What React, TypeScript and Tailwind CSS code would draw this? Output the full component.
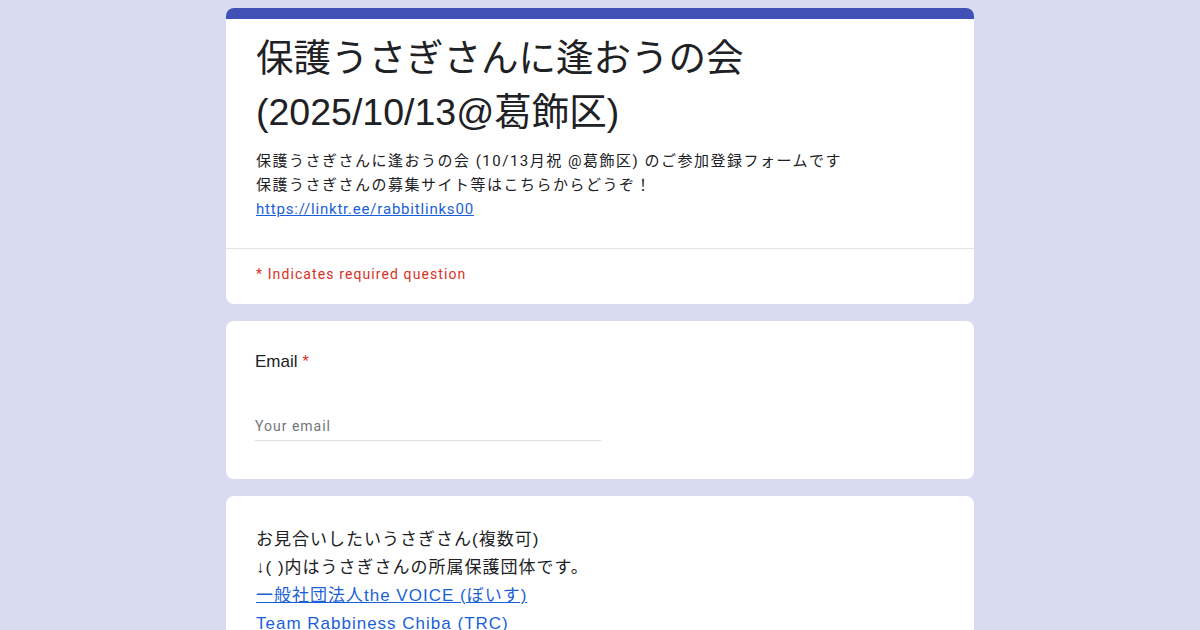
import React from 'react';

const jp = { fontFamily: '"Liberation Sans", "Noto Sans CJK JP", sans-serif' };
const rb = { fontFamily: 'Roboto, "Noto Sans CJK JP", sans-serif' };

const Card: React.FC<{ children: React.ReactNode; className?: string }> = ({ children, className }) => (
  <div className={`bg-white rounded-lg overflow-hidden ${className ?? ''}`}>{children}</div>
);

export default function App() {
  return (
    <div className="w-[1200px] h-[630px] overflow-hidden bg-[#d9dcf0]">
      <div className="w-[748px] mx-auto pt-2 flex flex-col gap-[17px]">
        <Card>
          <div className="h-[11px] bg-[#3f51b5]" />
          <div className="px-[30px] pt-[12px] pb-[27px]">
            <h1 className="text-[37.5px] leading-[54px] text-[#202124]" style={jp}>
              保護うさぎさんに逢おうの会
              <br />
              (2025/10/13@葛飾区)
            </h1>
            <div className="mt-[10px] text-[15px] leading-6 tracking-[1.5px] text-[#202124]" style={rb}>
              <p>保護うさぎさんに逢おうの会 (10/13月祝 @葛飾区) のご参加登録フォームです</p>
              <p>保護うさぎさんの募集サイト等はこちらからどうぞ！</p>
              <a href="#" className="text-[#1a5fd8] underline tracking-[0.8px]">https://linktr.ee/rabbitlinks00</a>
            </div>
          </div>
          <div className="border-t border-[#e4e4e8]" />
          <div className="px-[30px] pt-[15px] pb-[20px] text-[14px] leading-5 tracking-[1.1px] text-[#d93025]" style={rb}>
            * Indicates required question
          </div>
        </Card>

        <Card className="px-[29px] pt-[29px] pb-[38px]">
          <div className="text-[17px] leading-6 text-[#202124]" style={jp}>
            Email <span className="text-[#d93025]">*</span>
          </div>
          <div className="mt-[42px] w-[346px] border-b border-[#e0e0e0] pb-[4px]">
            <div className="text-[14px] leading-5 tracking-[1px] text-[#70757a]" style={rb}>Your email</div>
          </div>
        </Card>

        <Card className="px-[30px] pt-[30px] pb-6">
          <div className="text-[17px] leading-[28px] tracking-[1px] text-[#202124]" style={jp}>
            <p>お見合いしたいうさぎさん(複数可)</p>
            <p>↓( )内はうさぎさんの所属保護団体です。</p>
            <p>
              <a href="#" className="text-[#1a5fd8] underline">一般社団法人the VOICE (ぼいす)</a>
            </p>
            <p>
              <a href="#" className="text-[#1a5fd8]">Team Rabbiness Chiba (TRC)</a>
            </p>
          </div>
        </Card>
      </div>
    </div>
  );
}
